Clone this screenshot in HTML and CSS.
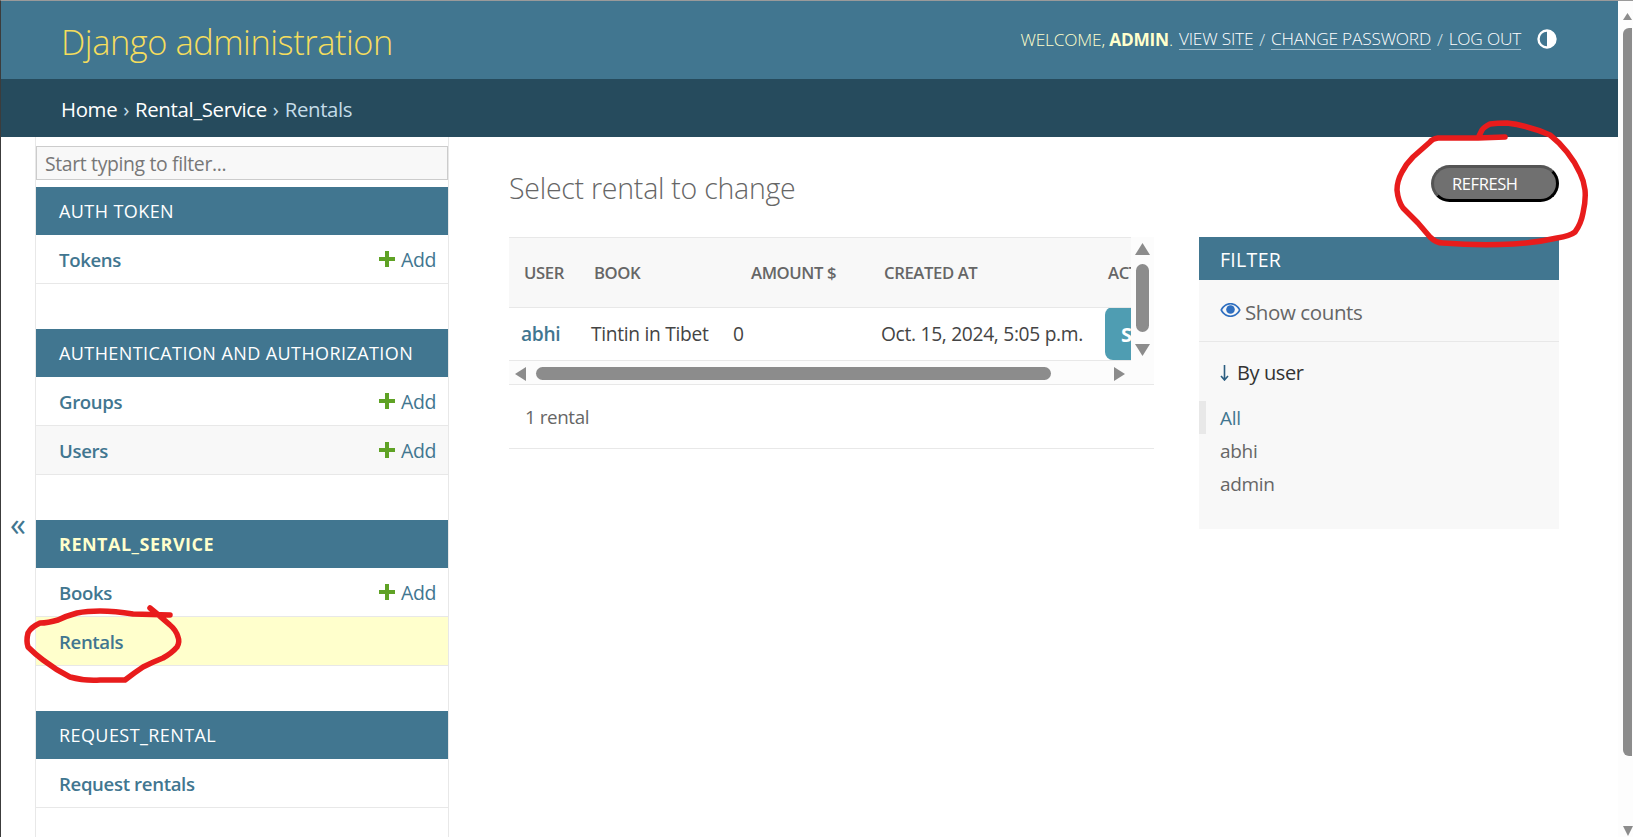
FILE: index.html
```html
<!DOCTYPE html>
<html lang="en">
<head>
<meta charset="utf-8">
<title>Select rental to change | Django site admin</title>
<link rel="stylesheet" href="styles.css">
</head>
<body>
<div class="window">
  <div class="page">
    <header class="header">
      <h1 class="brand">Django administration</h1>
      <div class="userlinks">
        <span>WELCOME, <strong>ADMIN</strong>.</span>
        <a href="#">VIEW SITE</a><span class="sep">/</span><a href="#">CHANGE PASSWORD</a><span class="sep">/</span><a href="#">LOG OUT</a>
        <svg class="theme" width="20" height="20" viewBox="0 0 20 20"><circle cx="10" cy="10" r="8.5" fill="none" stroke="#fff" stroke-width="2.4"/><path d="M10 1.5a8.5 8.5 0 0 1 0 17z" fill="#fff"/></svg>
      </div>
    </header>
    <nav class="crumbs"><a href="#">Home</a><span class="crumb-sep">›</span><a href="#">Rental_Service</a><span class="crumb-sep">›</span><span class="crumb-current">Rentals</span></nav>
    <div class="content">
      <div class="toggle">«</div>
      <aside class="sidebar">
        <input class="filter-input" placeholder="Start typing to filter...">
        <section class="module">
          <h2 class="module-head">AUTH TOKEN</h2>
          <div class="module-row"><a class="model" href="#">Tokens</a><a class="add" href="#"><svg class="plus" viewBox="0 0 16 16"><path d="M6 0h4v6h6v4h-6v6H6v-6H0V6h6z"/></svg>Add</a></div>
        </section>
        <section class="module">
          <h2 class="module-head">AUTHENTICATION AND AUTHORIZATION</h2>
          <div class="module-row"><a class="model" href="#">Groups</a><a class="add" href="#"><svg class="plus" viewBox="0 0 16 16"><path d="M6 0h4v6h6v4h-6v6H6v-6H0V6h6z"/></svg>Add</a></div>
          <div class="module-row alt"><a class="model" href="#">Users</a><a class="add" href="#"><svg class="plus" viewBox="0 0 16 16"><path d="M6 0h4v6h6v4h-6v6H6v-6H0V6h6z"/></svg>Add</a></div>
        </section>
        <section class="module">
          <h2 class="module-head current">RENTAL_SERVICE</h2>
          <div class="module-row"><a class="model" href="#">Books</a><a class="add" href="#"><svg class="plus" viewBox="0 0 16 16"><path d="M6 0h4v6h6v4h-6v6H6v-6H0V6h6z"/></svg>Add</a></div>
          <div class="module-row selected"><a class="model" href="#">Rentals</a></div>
        </section>
        <section class="module">
          <h2 class="module-head">REQUEST_RENTAL</h2>
          <div class="module-row"><a class="model" href="#">Request rentals</a></div>
        </section>
      </aside>
      <main class="main">
        <div class="title-row">
          <h1 class="title">Select rental to change</h1>
          <button class="refresh">REFRESH</button>
        </div>
        <div class="columns">
          <div class="results">
            <div class="results-scroll">
              <div class="table-clip">
                <table class="table">
                  <colgroup><col class="col-user"><col class="col-book"><col class="col-amount"><col class="col-created"><col class="col-action"></colgroup>
                  <thead>
                    <tr><th class="p15">USER</th><th class="p7">BOOK</th><th class="p22">AMOUNT $</th><th class="p7">CREATED AT</th><th class="p8">ACTION</th></tr>
                  </thead>
                  <tbody>
                    <tr><td class="p12"><a class="user-link" href="#">abhi</a></td><td class="p4">Tintin in Tibet</td><td class="p4">0</td><td class="p4">Oct. 15, 2024, 5:05 p.m.</td><td class="p5 action-cell"><span class="submit">Submit</span></td></tr>
                  </tbody>
                </table>
              </div>
              <div class="vbar">
                <svg class="v-arrow" width="15" height="12" viewBox="0 0 15 12"><path d="M7.5 0L15 12H0z"/></svg>
                <div class="v-thumb"></div>
                <svg class="v-arrow" width="15" height="12" viewBox="0 0 15 12"><path d="M0 0h15L7.5 12z"/></svg>
              </div>
            </div>
            <div class="hbar">
              <svg width="11" height="14" viewBox="0 0 11 14"><path d="M11 0v14L0 7z"/></svg>
              <div class="h-thumb"></div>
              <svg class="h-right" width="11" height="14" viewBox="0 0 11 14"><path d="M0 0v14l11-7z"/></svg>
            </div>
            <p class="paginator">1 rental</p>
          </div>
          <aside class="filter">
            <h2 class="filter-head">FILTER</h2>
            <div class="counts"><svg class="eye" width="21" height="14" viewBox="0 0 21 14"><path d="M10.5 0C6 0 2.300 2.700.3 7c2 4.300 5.700 7 10.200 7s8.200-2.700 10.200-7C18.700 2.700 15 0 10.500 0zm0 1.600c3.500 0 6.500 2.100 8.300 5.400-1.800 3.300-4.800 5.400-8.300 5.400S4 10.300 2.200 7C4 3.700 7 1.600 10.500 1.600z"/><circle cx="10.500" cy="6.500" r="4.300"/></svg>Show counts</div>
            <div class="by-user"><svg class="down" width="9" height="16" viewBox="0 0 9 16"><path d="M4.500 0v15M1 11l3.500 4L8 11" fill="none" stroke="#2b5d80" stroke-width="1.600"/></svg>By user</div>
            <ul class="choices">
              <li class="choice active"><a href="#">All</a></li>
              <li class="choice"><a href="#">abhi</a></li>
              <li class="choice"><a href="#">admin</a></li>
            </ul>
          </aside>
        </div>
      </main>
    </div>
  </div>
  <div class="page-scroll">
    <svg class="ps-up" width="9" height="7" viewBox="0 0 9 7"><path d="M4.500 0L9 7H0z"/></svg>
    <div class="ps-thumb"></div>
    <svg class="ps-down" width="10" height="10" viewBox="0 0 10 10"><path d="M0 0h10L5 10z"/></svg>
  </div>
  <svg class="ink" width="1633" height="837" viewBox="0 0 1633 837">
    <path d="M1505 137L1478 138L1438 138Q1432 139 1430 142L1413 157Q1406 164 1402 172Q1397 181 1397 190Q1398 201 1403 208L1418 223L1430 237Q1436 243 1443 243Q1480 246 1513 244Q1535 243 1557 238Q1570 236 1575 232Q1581 224 1583 213Q1586 200 1585 190Q1584 181 1580 173Q1575 162 1567 152Q1559 142 1550 135Q1539 130 1527 127Q1517 124 1507 123Q1497 123 1490 124Q1484 127 1482 130L1478 138"/>
    <path d="M170 615L133 614Q115 611 100 611Q87 611 77 613Q66 616 58 620Q48 623 40 623Q31 627 28 633Q26 641 28 647Q35 654 43 660Q56 670 70 677Q84 681 100 680H125Q134 673 143 667Q153 662 163 658Q172 653 177 647Q180 642 178 637Q176 630 170 625Q160 616 150 608"/>
  </svg>
</div>
</body>
</html>
```
FILE: styles.css
```css
* { box-sizing: border-box; }
html, body { margin: 0; padding: 0; height: 100%; overflow: hidden; background: #fff; }
body { font-family: "Open Sans", "Noto Sans", sans-serif; color: #333; }
a { text-decoration: none; color: inherit; }
h1, h2, p, ul { margin: 0; padding: 0; }

.window { position: relative; display: flex; height: 837px; border-top: 1px solid #9a9a9a; border-left: 1px solid #3c3c3c; }
.page { width: 1618px; display: flex; flex-direction: column; height: 836px; overflow: hidden; }

.header { height: 78px; flex: none; background: #417690; display: flex; align-items: center; justify-content: space-between; padding: 0 60px; }
.brand { font-size: 34.400px; font-weight: 300; color: #f5dd5d; letter-spacing: -0.45px; position: relative; top: 1px; }
.userlinks { display: flex; align-items: center; font-size: 17.300px; font-weight: 300; color: #ffc; letter-spacing: -0.2px; position: relative; top: -1px; }
.userlinks strong { font-weight: 700; }
.userlinks a { color: #fff; border-bottom: 1px solid #9fbccb; margin-left: 6px; line-height: 20px; }
.sep { margin-left: 6px; color: #dfe9ee; }
.theme { margin-left: 16px; margin-right: 1px; }

.crumbs { height: 58px; flex: none; background: #264b5d; display: flex; align-items: center; padding: 1px 0 0 60px; font-size: 20.400px; color: #fff; letter-spacing: -0.35px; }
.crumb-sep { margin: 0 6px; color: #c4dce8; }
.crumb-current { color: #c4dce8; }

.content { display: flex; flex: 1; min-height: 0; }
.toggle { width: 34px; flex: none; display: flex; align-items: center; justify-content: center; font-size: 32px; color: #417690; padding-bottom: 8px; height: 780px; }
.sidebar { width: 414px; flex: none; border-left: 1px solid #e8e8e8; border-right: 1px solid #e8e8e8; padding-top: 9px; overflow: hidden; display: flex; flex-direction: column; }
.filter-input { width: 100%; height: 34px; flex: none; border: 1px solid #ccc; background: #f8f8f8; padding: 0 8px; margin: 0 0 7px; font: 19.400px "Open Sans", sans-serif; letter-spacing: -0.35px; outline: 0; }
.filter-input::placeholder { color: #777; opacity: 1; }
.module { margin-bottom: 45px; flex: none; }
.module-head { height: 48px; background: #417690; color: #fff; display: flex; align-items: center; padding-left: 23px; font-size: 18px; font-weight: 400; letter-spacing: 0.42px; }
.module-head.current { color: #ffc; font-weight: 700; letter-spacing: 0.5px; }
.module-row { height: 49px; display: flex; align-items: center; justify-content: space-between; padding: 1px 12px 0 23px; border-bottom: 1px solid #e8e8e8; }
.module-row.alt { background: #f8f8f8; }
.module-row.selected { background: #ffc; }
.model { font-size: 18.600px; font-weight: 600; color: #417690; letter-spacing: -0.35px; }
.add { display: flex; align-items: center; font-size: 19.500px; color: #417690; letter-spacing: -0.4px; }
.plus { width: 16px; height: 16px; fill: #5fa225; margin-right: 6px; position: relative; top: -1px; }

.main { flex: 1; min-width: 0; padding: 0 59px 0 60px; }
.title-row { height: 100px; display: flex; align-items: center; justify-content: space-between; padding-top: 3px; }
.title { font-size: 28.500px; font-weight: 300; color: #666; letter-spacing: -0.25px; position: relative; top: -1px; }
.refresh { width: 128px; height: 37px; margin-bottom: 10px; border-radius: 19px; background: #707070; color: #fff; font: 400 16.500px "Open Sans", sans-serif; letter-spacing: -0.4px; text-align: left; padding: 0 0 0 18px; border: 3px solid; border-color: #555 #000 #000 #555; }

.columns { display: flex; justify-content: space-between; align-items: flex-start; }
.results { width: 645px; }
.results-scroll { display: flex; height: 124px; background: #fcfcfc; }
.table-clip { width: 622px; height: 124px; overflow: hidden; }
.table { width: 720px; table-layout: fixed; border-collapse: collapse; }
.col-user { width: 78px; } .col-book { width: 142px; } .col-amount { width: 148px; } .col-created { width: 223px; } .col-action { width: 129px; }
.table th { height: 70px; padding-top: 0; padding-bottom: 0; background: #f8f8f8; border-top: 1px solid #e8e8e8; border-bottom: 1px solid #e8e8e8; text-align: left; font-size: 16.700px; font-weight: 600; color: #666; letter-spacing: -0.4px; white-space: nowrap; }
.table td { height: 53px; padding-top: 0; padding-bottom: 0; border-bottom: 1px solid #e8e8e8; font-size: 19.200px; line-height: 24px; background: #fff; white-space: nowrap; letter-spacing: -0.3px; color: #444; overflow: hidden; vertical-align: middle; }
.table td.action-cell { vertical-align: top; }
.p15 { padding-left: 15px; } .p7 { padding-left: 7px; } .p8 { padding-left: 8px; } .p22 { padding-left: 22px; } .p12 { padding-left: 12px; } .p4 { padding-left: 4px; } .p5 { padding-left: 5px; }
.user-link { color: #417690; font-weight: 600; }
.submit { display: block; width: 110px; height: 53px; margin-top: -1px; margin-bottom: -1px; border-radius: 8px 0 0 8px; background: #4f9db2; color: #fff; font-weight: 700; padding-left: 16px; line-height: 56px; font-size: 20px; }
.vbar { width: 23px; display: flex; flex-direction: column; align-items: center; padding-top: 6px; fill: #8c8c8c; }
.v-thumb { width: 13px; height: 68px; border-radius: 7px; background: #8c8c8c; margin: 9px 0 12px; }
.hbar { height: 24px; display: flex; align-items: flex-start; padding: 6px 0 0 6px; background: #fcfcfc; border-bottom: 1px solid #e8e8e8; fill: #8c8c8c; }
.h-thumb { width: 515px; height: 13px; border-radius: 7px; background: #8c8c8c; margin-left: 10px; }
.h-right { margin-left: 63px; }
.paginator { height: 64px; display: flex; align-items: center; padding-left: 16px; border-bottom: 1px solid #e8e8e8; font-size: 18.800px; color: #666; letter-spacing: -0.4px; }

.filter { width: 360px; height: 292px; background: #f8f8f8; }
.filter-head { height: 43px; background: #417690; color: #fff; font-size: 19.500px; font-weight: 400; display: flex; align-items: center; padding: 1px 0 0 21px; letter-spacing: 0.3px; }
.counts { height: 62px; display: flex; align-items: center; padding: 3px 0 0 21px; border-bottom: 1px solid #e8e8e8; font-size: 20.500px; color: #666; letter-spacing: -0.4px; }
.eye { fill: #2f6fc0; margin-right: 4px; position: relative; top: -2px; }
.by-user { display: flex; align-items: center; height: 50px; padding: 11px 0 0 21px; font-size: 20px; color: #333; letter-spacing: -0.4px; }
.down { margin-right: 8px; }
.choices { list-style: none; margin-top: 9px; }
.choice { height: 33px; display: flex; align-items: center; padding-left: 21px; font-size: 19px; color: #666; letter-spacing: -0.3px; }
.choice.active { color: #417690; border-left: 7px solid #e8e8e8; padding-left: 14px; }

.page-scroll { flex: 1; position: relative; background: #fdfdfd; fill: #8c8c8c; }
.ps-up { display: block; margin: 12px 0 0 5px; }
.ps-thumb { width: 9px; height: 728px; margin: 8px 0 0 5px; border-radius: 6px 0 0 6px; background: #8c8c8c; }
.ps-down { display: block; margin: 70px 0 0 5px; }

.ink { position: absolute; left: -1px; top: -1px; pointer-events: none; }
.ink path { fill: none; stroke: #e81c1c; stroke-width: 5.500; stroke-linecap: round; stroke-linejoin: round; }
```
